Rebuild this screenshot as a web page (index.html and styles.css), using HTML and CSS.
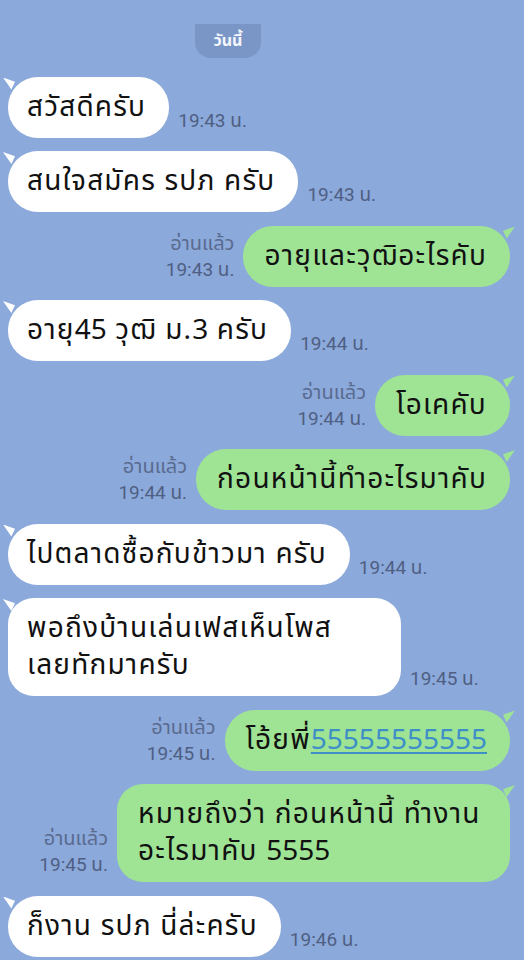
FILE: index.html
```html
<!DOCTYPE html>
<html lang="th">
<head>
    <meta charset="UTF-8">
    <meta name="viewport" content="width=device-width, initial-scale=1.0">
    <title>แชท</title>
    <link rel="stylesheet" href="styles.css">
</head>
<body>
    <div class="chat">
        <div class="date"><span>วันนี้</span></div>

        <div class="row in">
            <div class="bubble">สวัสดีครับ</div>
            <div class="meta"><span class="time">19:43 น.</span></div>
        </div>

        <div class="row in">
            <div class="bubble">สนใจสมัคร รปภ ครับ</div>
            <div class="meta"><span class="time">19:43 น.</span></div>
        </div>

        <div class="row out">
            <div class="meta"><span class="read">อ่านแล้ว</span><span class="time">19:43 น.</span></div>
            <div class="bubble">อายุและวุฒิอะไรคับ</div>
        </div>

        <div class="row in">
            <div class="bubble">อายุ<span class="digits">45</span> วุฒิ ม.<span class="digits">3</span> ครับ</div>
            <div class="meta"><span class="time">19:44 น.</span></div>
        </div>

        <div class="row out">
            <div class="meta"><span class="read">อ่านแล้ว</span><span class="time">19:44 น.</span></div>
            <div class="bubble">โอเคคับ</div>
        </div>

        <div class="row out">
            <div class="meta"><span class="read">อ่านแล้ว</span><span class="time">19:44 น.</span></div>
            <div class="bubble">ก่อนหน้านี้ทำอะไรมาคับ</div>
        </div>

        <div class="row in">
            <div class="bubble">ไปตลาดซื้อกับข้าวมา ครับ</div>
            <div class="meta"><span class="time">19:44 น.</span></div>
        </div>

        <div class="row in">
            <div class="bubble wide"><span class="line">พอถึงบ้านเล่นเฟสเห็นโพส</span><span class="line">เลยทักมาครับ</span></div>
            <div class="meta"><span class="time">19:45 น.</span></div>
        </div>

        <div class="row out">
            <div class="meta"><span class="read">อ่านแล้ว</span><span class="time">19:45 น.</span></div>
            <div class="bubble">โอ้ยพี่<a href="#" class="num digits">55555555555</a></div>
        </div>

        <div class="row out">
            <div class="meta"><span class="read">อ่านแล้ว</span><span class="time">19:45 น.</span></div>
            <div class="bubble wide"><span class="line">หมายถึงว่า ก่อนหน้านี้ ทำงาน</span><span class="line">อะไรมาคับ <span class="digits">5555</span></span></div>
        </div>

        <div class="row in">
            <div class="bubble">ก็งาน รปภ นี่ล่ะครับ</div>
            <div class="meta"><span class="time">19:46 น.</span></div>
        </div>
    </div>
</body>
</html>
```

FILE: styles.css
```css
html,
body {
    margin: 0;
    padding: 0;
    height: 100%;
    overflow: hidden;
}

body {
    background-color: #8ba9da;
    font-family: "Noto Sans Thai", "Noto Sans", Roboto, sans-serif;
    color: #111;
}

.chat {
    display: flex;
    flex-direction: column;
    gap: 13.5px;
    padding: 24px 14px 0 8px;
}

.date {
    display: flex;
    justify-content: center;
    margin-bottom: 5px;
    padding-right: 62px;
}

.date span {
    background-color: #7a96c6;
    color: #f4f7fc;
    font-size: 16px;
    font-weight: bold;
    line-height: 34px;
    padding: 0 19px;
    border-radius: 0 0 16px 16px;
}

.row {
    display: flex;
    align-items: flex-end;
    gap: 9px;
}

.row.out {
    justify-content: flex-end;
}

.bubble {
    position: relative;
    box-sizing: border-box;
    font-size: 28px;
    letter-spacing: 1.2px;
    line-height: 37px;
    padding: 12px 23px 12px 19px;
    border-radius: 30px;
    background-color: #fff;
    white-space: nowrap;
}

.bubble.wide {
    width: 393px;
    border-radius: 26px;
}

.line {
    display: block;
    height: 37px;
}

.digits {
    letter-spacing: 0;
}

/* small tail on the top corner */
.bubble::before {
    content: "";
    position: absolute;
    top: 1px;
    width: 12px;
    height: 12px;
}

.in .bubble::before {
    left: -5px;
    background: #fff;
    clip-path: polygon(0 0, 100% 35%, 70% 100%);
}

.out .bubble {
    background-color: #9fe395;
    padding-left: 21px;
    padding-right: 23px;
}

.out .bubble::before {
    right: -5px;
    background: #9fe395;
    clip-path: polygon(100% 0, 0 35%, 30% 100%);
}

.meta {
    display: flex;
    flex-direction: column;
    padding-bottom: 5px;
    font-family: Roboto, "Noto Sans Thai", sans-serif;
    font-size: 19px;
    line-height: 25px;
    color: #4f5f83;
}

.out .meta {
    align-items: flex-end;
}

.read {
    font-family: "Noto Sans Thai", Roboto, sans-serif;
    font-size: 20px;
    color: #5a6b90;
}

.num {
    color: #3d8fc6;
    text-decoration: underline;
    text-underline-offset: 3px;
}
```
